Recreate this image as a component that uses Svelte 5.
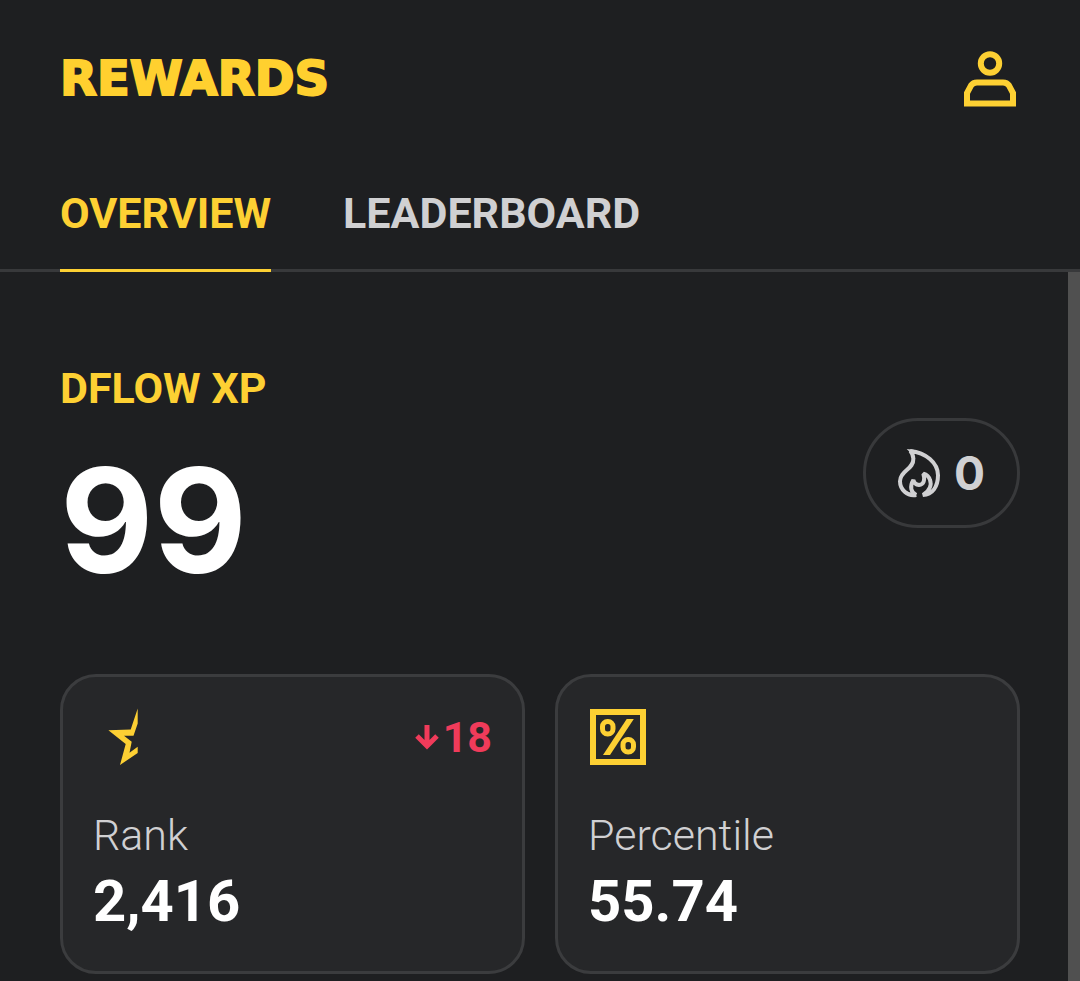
<script lang="ts">
	type Tab = 'overview' | 'leaderboard';

	const tabs: { id: Tab; label: string }[] = [
		{ id: 'overview', label: 'OVERVIEW' },
		{ id: 'leaderboard', label: 'LEADERBOARD' }
	];

	let active = $state<Tab>('overview');

	const xp = 99;
	const streak = 0;
	const rank = 2416;
	const rankChange = 18;
	const percentile = 55.74;
</script>

<div class="page">
	<header class="header">
		<h1 class="wordmark">REWARDS</h1>
		<button type="button" class="profile" aria-label="Profile">
			<svg viewBox="0 0 60 60" fill="none" stroke="currentColor" stroke-width="6">
				<circle cx="30" cy="15.5" r="9.2" />
				<path d="M7 55.500V45L11 37.500Q13 34.500 17 34.500H43Q47 34.500 49 37.500L53 45V55.500Z" />
			</svg>
		</button>
	</header>

	<nav class="tabs">
		{#each tabs as tab (tab.id)}
			<button type="button" class="tab" class:active={active === tab.id} onclick={() => (active = tab.id)}>
				{tab.label}
			</button>
		{/each}
	</nav>

	<div class="body">
		<main class="content">
			<section class="summary">
				<div>
					<h2 class="title">DFLOW XP</h2>
					<p class="xp">{xp}</p>
				</div>
				<div class="streak">
					<svg viewBox="15 15 126 144" fill="none" stroke="currentColor" stroke-width="12" stroke-miterlimit="2">
						<path d="M70 153C42 158 21 136 21 112C21 80 63 76 61 44C61 34 57 27 52 21C98 26 135 56 135 94C135 128 118 153 90 153C112 140 116 120 111 108C108 98 102 92 91 89C97 108 92 122 78 123C69 122 63 117 61 108C49 128 54 146 70 153" />
						<path d="M41 15L62 17L56 30Z" fill="currentColor" stroke="none" />
					</svg>
					<span>{streak}</span>
				</div>
			</section>

			<section class="cards">
				<article class="card">
					<div class="card-top">
						<svg class="star" viewBox="0 0 56 56" fill="currentColor">
							<path d="M28.700 -.5V14.500L24.500 26.700H15L22.700 32.700L20.500 43.700L28.700 37.700V44L11 56L16.700 35L-.6 21.300L21.700 20.500Z" />
						</svg>
						<span class="change">
							<svg viewBox="0 0 24 24" fill="none" stroke="currentColor" stroke-width="5">
								<path d="M12 0V21M2 11L12 21L22 11" />
							</svg>
							{rankChange}
						</span>
					</div>
					<p class="label">Rank</p>
					<p class="value">{rank.toLocaleString('en-US')}</p>
				</article>

				<article class="card">
					<div class="card-top">
						<svg class="percent" viewBox="0 0 56 56" fill="none" stroke="currentColor" stroke-width="6">
							<rect x="3" y="3" width="50" height="50" />
							<rect x="12.500" y="12.500" width="10.500" height="12.500" rx="5" stroke-width="5" />
							<rect x="33" y="30.500" width="10.500" height="12.500" rx="5" stroke-width="5" />
							<path d="M36.700 10H43.800L20 46H13Z" fill="currentColor" stroke="none" />
						</svg>
					</div>
					<p class="label">Percentile</p>
					<p class="value">{percentile}</p>
				</article>
			</section>
		</main>
		<div class="scroll-thumb"></div>
	</div>
</div>

<style>
	:global(body) {
		background: #1e1f21;
	}

	.page {
		display: flex;
		flex-direction: column;
		min-height: 100vh;
		background: #1e1f21;
		color: #d0d0d2;
		font-family: Roboto, 'Liberation Sans', sans-serif;
	}

	h1,
	h2,
	p {
		margin: 0;
	}

	svg {
		display: block;
		overflow: visible;
	}

	button {
		padding: 0;
		border: 0;
		background: none;
		font: inherit;
		cursor: pointer;
	}

	.header {
		display: flex;
		align-items: center;
		justify-content: space-between;
		padding: 48px 60px;
	}

	.wordmark {
		color: #ffd02f;
		font-family: 'DejaVu Sans', sans-serif;
		font-size: 48px;
		font-weight: 700;
		line-height: 60px;
		-webkit-text-stroke: 2px #ffd02f;
	}

	.profile {
		color: #fdd033;
	}

	.profile svg {
		width: 60px;
		height: 60px;
	}

	.tabs {
		display: flex;
		gap: 72px;
		padding: 29px 60px 0;
		box-shadow: inset 0 -3px #38393b;
	}

	.tab {
		padding-bottom: 28px;
		border-bottom: 3px solid transparent;
		color: #d0d0d2;
		font-size: 43px;
		font-weight: 700;
		line-height: 56px;
	}

	.tab.active {
		border-bottom-color: #fdd033;
		color: #fdd033;
	}

	.body {
		display: flex;
		flex: 1;
	}

	.content {
		flex: 1;
		padding: 88px 48px 8px 60px;
	}

	.scroll-thumb {
		width: 12px;
		background: #505050;
	}

	.summary {
		display: flex;
		align-items: center;
		justify-content: space-between;
	}

	.title {
		color: #fdd033;
		font-size: 43px;
		font-weight: 700;
		line-height: 56px;
	}

	.xp {
		margin-top: 38px;
		color: #fff;
		font-family: Inter, Roboto, sans-serif;
		font-size: 144px;
		font-weight: 700;
		line-height: 132px;
	}

	.streak {
		display: flex;
		align-items: center;
		gap: 14px;
		padding: 24px 32px;
		border: 3px solid #38393b;
		border-radius: 56px;
		font-family: Inter, Roboto, sans-serif;
		font-size: 46px;
		font-weight: 700;
		line-height: 56px;
	}

	.streak svg {
		width: 42px;
		height: 48px;
	}

	.cards {
		display: grid;
		grid-template-columns: 1fr 1fr;
		gap: 30px;
		margin-top: 88px;
	}

	.card {
		padding: 32px 30px;
		border: 3px solid #3b3c3e;
		border-radius: 36px;
		background: #262729;
	}

	.card-top {
		display: flex;
		align-items: center;
		justify-content: space-between;
		height: 56px;
		margin-bottom: 42px;
		color: #fdd033;
	}

	.star,
	.percent {
		width: 56px;
		height: 56px;
	}

	.star {
		margin-left: 16px;
	}

	.percent {
		margin-left: 2px;
	}

	.change {
		display: flex;
		align-items: center;
		gap: 4px;
		color: #f03b5a;
		font-size: 43px;
		font-weight: 700;
		line-height: 56px;
	}

	.change svg {
		width: 24px;
		height: 24px;
	}

	.label {
		font-size: 43px;
		font-weight: 300;
		line-height: 56px;
	}

	.value {
		color: #fff;
		font-size: 58px;
		font-weight: 700;
		line-height: 76px;
	}
</style>
